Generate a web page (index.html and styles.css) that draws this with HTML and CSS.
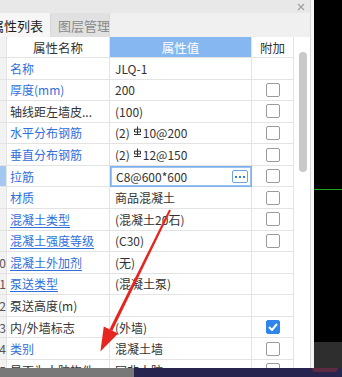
FILE: index.html
```html
<!DOCTYPE html>
<html lang="zh-CN">
<head>
<meta charset="utf-8">
<title>属性列表</title>
<link rel="stylesheet" href="styles.css">
</head>
<body>
<div class="screen">
  <div class="main">
    <div class="panel">
      <div class="titlebar">
        <svg class="close" width="8" height="8" viewBox="0 0 8 8"><path d="M1 1L7 7M7 1L1 7" stroke="#a0a0a0" stroke-width="1.2"/></svg>
      </div>
      <div class="tabs">
        <div class="tab active">属性列表</div>
        <div class="tab">图层管理</div>
      </div>
      <div class="body">
        <div class="grid">
          <div class="c num"></div>
          <div class="c h">属性名称</div>
          <div class="c h hv">属性值</div>
          <div class="c h">附加</div>

          <div class="c num"></div>
          <div class="c name">名称</div>
          <div class="c val">JLQ-1</div>
          <div class="c ext"></div>

          <div class="c num"></div>
          <div class="c name">厚度(mm)</div>
          <div class="c val">200</div>
          <div class="c ext"><span class="cb"></span></div>

          <div class="c num"></div>
          <div class="c name plain">轴线距左墙皮...</div>
          <div class="c val">(100)</div>
          <div class="c ext"><span class="cb"></span></div>

          <div class="c num"></div>
          <div class="c name">水平分布钢筋</div>
          <div class="c val">(2)<svg class="bar" width="9" height="10" viewBox="0 0 9 10"><path d="M4.5 0.5V8.5M1.5 3.2H7.5V6H1.5Z M1 8.5H8" stroke="#333" stroke-width="1" fill="none"/></svg>10@200</div>
          <div class="c ext"><span class="cb"></span></div>

          <div class="c num"></div>
          <div class="c name">垂直分布钢筋</div>
          <div class="c val">(2)<svg class="bar" width="9" height="10" viewBox="0 0 9 10"><path d="M4.5 0.5V8.5M1.5 3.2H7.5V6H1.5Z M1 8.5H8" stroke="#333" stroke-width="1" fill="none"/></svg>12@150</div>
          <div class="c ext"><span class="cb"></span></div>

          <div class="c num sel"></div>
          <div class="c name">拉筋</div>
          <div class="c val edit">C8@600*600<span class="more"><i></i><i></i><i></i></span></div>
          <div class="c ext"><span class="cb"></span></div>

          <div class="c num"></div>
          <div class="c name">材质</div>
          <div class="c val">商品混凝土</div>
          <div class="c ext"><span class="cb"></span></div>

          <div class="c num"></div>
          <div class="c name"><u>混凝土类型</u></div>
          <div class="c val">(混凝土20石)</div>
          <div class="c ext"><span class="cb"></span></div>

          <div class="c num"></div>
          <div class="c name"><u>混凝土强度等级</u></div>
          <div class="c val">(C30)</div>
          <div class="c ext"><span class="cb"></span></div>

          <div class="c num">10</div>
          <div class="c name"><u>混凝土外加剂</u></div>
          <div class="c val">(无)</div>
          <div class="c ext"></div>

          <div class="c num">11</div>
          <div class="c name"><u>泵送类型</u></div>
          <div class="c val">(混凝土泵)</div>
          <div class="c ext"></div>

          <div class="c num">12</div>
          <div class="c name plain">泵送高度(m)</div>
          <div class="c val"></div>
          <div class="c ext"></div>

          <div class="c num">13</div>
          <div class="c name plain">内/外墙标志</div>
          <div class="c val">(外墙)</div>
          <div class="c ext"><span class="cb on"><svg width="10" height="8" viewBox="0 0 10 8"><path d="M1 4L4 7L9 1" stroke="#fff" stroke-width="2" fill="none"/></svg></span></div>

          <div class="c num">14</div>
          <div class="c name">类别</div>
          <div class="c val">混凝土墙</div>
          <div class="c ext"><span class="cb"></span></div>

          <div class="c num">15</div>
          <div class="c name plain">是否为人防构件</div>
          <div class="c val">同非人防</div>
          <div class="c ext"><span class="cb"></span></div>
        </div>
        <div class="scroll"><div class="thumb"></div></div>
      </div>
    </div>
    <div class="sep"></div>
    <div class="canvas">
      <div class="cv-top"></div>
      <div class="cv-line"></div>
      <div class="cv-mid"></div>
      <div class="cv-bot"></div>
    </div>
  </div>
  <div class="taskbar">
    <div class="tb-gray"></div>
    <div class="tb-navy"><div class="tb-red"></div></div>
  </div>
  <svg class="arrow" width="342" height="377" viewBox="0 0 342 377">
    <polygon points="170.9,210.4 169.1,209.6 109.5,329.2 112.4,330.8" fill="#e5251f"/>
    <polygon points="118.2,333.5 103.8,326.5 100.4,351.5" fill="#e5251f"/>
  </svg>
</div>
</body>
</html>
```
FILE: styles.css
```css
* { box-sizing: border-box; }
html, body { margin: 0; padding: 0; }
body {
  width: 342px;
  height: 377px;
  overflow: hidden;
  font-family: "Noto Sans CJK SC", "Noto Sans", sans-serif;
  font-size: 12px;
  color: #333;
}
.screen { position: relative; display: flex; flex-direction: column; height: 377px; }
.main { display: flex; height: 368px; }
.panel {
  width: 311px;
  border-right: 1px solid #d6d6d6;
  background: #f0f0f0;
  display: flex;
  flex-direction: column;
}
.titlebar {
  height: 13px;
  background: #e8e8e8;
  display: flex;
  justify-content: flex-end;
  align-items: center;
  padding-right: 5px;
}
.tabs { height: 24px; display: flex; background: #f0f0f0; }
.tab {
  display: flex;
  align-items: center;
  font-size: 13px;
  white-space: nowrap;
  overflow: hidden;
}
.tab.active {
  width: 50px;
  justify-content: flex-end;
  padding-right: 7px;
  background: #f6f6f6;
  color: #1e1e1e;
}
.tab:not(.active) {
  width: 60px;
  justify-content: center;
  padding-left: 8px;
  background: #e1e1e1;
  color: #8a8a8a;
  border-left: 1px solid #d8d8d8;
  border-right: 1px solid #d8d8d8;
}
.body { flex: 1; display: flex; background: #fff; overflow: hidden; }
.grid {
  width: 294px;
  display: grid;
  grid-template-columns: 7px 103px 142px 42px;
  grid-template-rows: 21px;
  grid-auto-rows: 21.57px;
  align-content: start;
}
.c {
  display: flex;
  align-items: center;
  border-right: 1px solid #e3e3e3;
  border-bottom: 1px solid #e3e3e3;
  white-space: nowrap;
  overflow: hidden;
}
.num {
  background: #f2f2f2;
  justify-content: flex-end;
  color: #555;
  padding-right: 0;
}
.num.sel { background: #a3c8f2; }
.h { justify-content: center; color: #333; font-size: 12.5px; }
.h.hv { background: #86b7f0; color: #fff; }
.name { padding-left: 3px; color: #2f6fdc; }
.name.plain { color: #333; }
.name u { text-underline-offset: 2px; }
.val { padding-left: 5px; color: #333; }
.bar { margin: 0 1px 4px 3px; }
.val.edit {
  border: 1px solid #7cb0ec;
  box-shadow: inset 0 0 0 1px #9cc3f2;
}
.more {
  margin-left: auto;
  margin-right: 3px;
  width: 16px;
  height: 13px;
  border: 1px solid #6aa3e6;
  border-radius: 2px;
  display: flex;
  align-items: center;
  justify-content: center;
  gap: 2px;
}
.more i { width: 2px; height: 2px; background: #3a7fdd; }
.ext { justify-content: center; }
.cb {
  width: 14px;
  height: 14px;
  border: 1px solid #9a9a9a;
  border-radius: 2px;
  background: #fff;
  display: flex;
  align-items: center;
  justify-content: center;
}
.cb.on { background: #2f86ea; border-color: #2f86ea; }
.scroll { width: 16px; background: #fff; padding: 15px 0 0 5px; }
.thumb { width: 8px; height: 120px; border-radius: 4px; background: #c9c9c9; }
.sep { width: 3px; background: #f5f5f5; }
.canvas { flex: 1; background: #000; display: flex; flex-direction: column; }
.cv-top { height: 189px; }
.cv-line { height: 1px; background: #1ea51e; }
.cv-mid { flex: 1; }
.cv-bot { height: 26px; background: #2e2e2e; }
.taskbar { height: 9px; display: flex; }
.tb-gray { width: 134px; background: #787878; }
.tb-navy { flex: 1; background: #27244f; padding-left: 178px; }
.tb-red { width: 26px; height: 4px; background: #5e2a40; border-radius: 0 0 6px 6px; }
.arrow { position: absolute; left: 0; top: 0; pointer-events: none; }
```
